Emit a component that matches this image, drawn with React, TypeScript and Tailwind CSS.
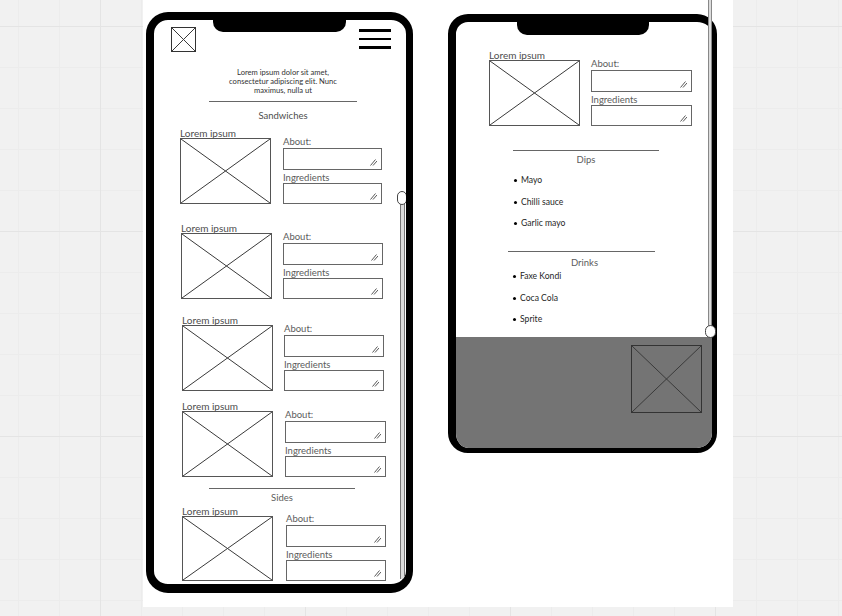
import React from 'react';

// wireframe cross box (image placeholder)
const XBox = ({ className }: { className: string }) => (
  <div className={`relative border ${className}`}>
    <svg className="absolute inset-0 h-full w-full" viewBox="0 0 100 100" preserveAspectRatio="none">
      <line x1="0" y1="0" x2="100" y2="100" stroke="#3a3a3a" strokeWidth="1" vectorEffect="non-scaling-stroke" />
      <line x1="100" y1="0" x2="0" y2="100" stroke="#3a3a3a" strokeWidth="1" vectorEffect="non-scaling-stroke" />
    </svg>
  </div>
);

const Field = ({ h }: { h: string }) => (
  <div className={`relative w-full border border-[#666] bg-white ${h}`}>
    <svg className="absolute bottom-[3px] right-[4px]" width="7" height="7" viewBox="0 0 7 7">
      <path d="M0.5 6.5 L5.5 0.5 M3 6.5 L7 2" stroke="#444" strokeWidth="0.9" fill="none" />
    </svg>
  </div>
);

type ItemProps = { wrap: string; gap: string; fieldW: string; boxH?: string };

const MenuItem = ({ wrap, gap, fieldW, boxH = 'h-[66px]' }: ItemProps) => (
  <div className={`flex items-end ${wrap} ${gap}`}>
    <div className="flex flex-col">
      <span className="h-[10px] whitespace-nowrap text-[10px] leading-[10px] text-[#4d4d4d]">Lorem ipsum</span>
      <XBox className={`w-[91px] border-[#555] ${boxH}`} />
    </div>
    <div className={`flex flex-col ${fieldW}`}>
      <span className="h-[12px] text-[9.5px] leading-[12px] text-[#5c5c5c]">About:</span>
      <Field h="h-[22px]" />
      <span className="mt-[2px] h-[11px] text-[9.5px] leading-[11px] text-[#5c5c5c]">Ingredients</span>
      <Field h="h-[21px]" />
    </div>
  </div>
);

const Bullet = ({ label }: { label: string }) => (
  <li className="flex h-[21.5px] items-center gap-[4px] text-[8.6px] text-[#262626]">
    <span className="h-[3px] w-[3px] rounded-full bg-black" />
    {label}
  </li>
);

export default function App() {
  return (
    <div className="h-[616px] w-[842px] overflow-hidden bg-[#f1f1f1] bg-[linear-gradient(to_right,#e4e4e4_1px,transparent_1px),linear-gradient(to_bottom,#e4e4e4_1px,transparent_1px),linear-gradient(to_right,#ececec_1px,transparent_1px),linear-gradient(to_bottom,#ececec_1px,transparent_1px)] bg-size-[205px_205px,205px_205px,41px_41px,41px_41px] bg-position-[100px_26px] font-[family-name:Lato,sans-serif]">
      {/* Canvas */}
      <div className="relative ml-[143px] flex h-[607px] w-[590px] items-start bg-white">
        {/* Left phone */}
        <div className="relative ml-[3px] mt-[12px] h-[581px] w-[267px] overflow-hidden rounded-[22px] border-b-[9px] border-l-[8px] border-r-[7px] border-t-[8px] border-black bg-white">
          <div className="absolute left-[59px] top-0 h-[12px] w-[133px] rounded-b-[10px] bg-black" />

          <div className="flex items-start justify-between pl-[17px] pr-[15px] pt-[7px]">
            <XBox className="h-[25px] w-[25px] border-[#333]" />
            <div className="mt-[2px] flex w-[32px] flex-col gap-[6px]">
              <div className="h-[2.5px] bg-black" />
              <div className="h-[2.5px] bg-black" />
              <div className="h-[2.5px] bg-black" />
            </div>
          </div>

          <div className="ml-[55px] w-[148px] text-center">
            <p className="mt-[15.5px] whitespace-nowrap text-[7.6px] leading-[9px] text-[#333]">
              Lorem ipsum dolor sit amet,
              <br />
              consectetur adipiscing elit. Nunc
              <br />
              maximus, nulla ut
            </p>
            <div className="mt-[6.5px] h-px bg-[#666]" />
            <p className="mt-[8px] text-[9.5px] leading-[12px] text-[#4d4d4d]">Sandwiches</p>
          </div>

          <MenuItem wrap="mt-[6px] pl-[26px]" gap="gap-[12px]" fieldW="w-[99px]" />
          <MenuItem wrap="mt-[19px] pl-[27px]" gap="gap-[11px]" fieldW="w-[100px]" />
          <MenuItem wrap="mt-[16px] pl-[28px]" gap="gap-[11px]" fieldW="w-[100px]" />
          <MenuItem wrap="mt-[10px] pl-[28px]" gap="gap-[12px]" fieldW="w-[101px]" />

          <div className="ml-[55px] w-[146px] text-center">
            <div className="mt-[11px] h-px bg-[#666]" />
            <p className="mt-[3px] text-[9.5px] leading-[12px] text-[#5c5c5c]">Sides</p>
          </div>

          <MenuItem wrap="mt-[2px] pl-[28px]" gap="gap-[13px]" fieldW="w-[100px]" boxH="h-[65px]" />

          {/* scroll track */}
          <div className="absolute bottom-[5px] left-[246px] top-[180px] w-[5px] border-x border-[#777] bg-[#dcdcdc]" />
          <div className="absolute left-[243px] top-[171px] h-[14px] w-[10px] rounded-full border border-[#444] bg-white" />
        </div>

        {/* Right phone */}
        <div className="relative ml-[35px] mt-[14px] flex h-[439px] w-[269px] flex-col overflow-hidden rounded-[20px] border-b-[5px] border-l-[8px] border-r-[5px] border-t-[8px] border-black bg-white">
          <div className="absolute left-[61px] top-0 h-[13px] w-[132px] rounded-b-[10px] bg-black" />

          <div className="h-[315px] shrink-0 pt-[28px]">
            <MenuItem wrap="pl-[33px]" gap="gap-[11px]" fieldW="w-[101px]" />

            <div className="ml-[57px] mt-[24px] h-px w-[146px] bg-[#666]" />
            <p className="ml-[57px] mt-[3px] w-[146px] text-center text-[9.5px] leading-[12px] text-[#5c5c5c]">Dips</p>
            <ul className="mt-[4px] pl-[58px]">
              <Bullet label="Mayo" />
              <Bullet label="Chilli sauce" />
              <Bullet label="Garlic mayo" />
            </ul>

            <div className="ml-[52px] mt-[16.5px] h-px w-[147px] bg-[#666]" />
            <p className="ml-[55px] mt-[6px] h-[10px] w-[147px] text-center text-[9.5px] leading-[10px] text-[#5c5c5c]">Drinks</p>
            <ul className="mt-[-2px] pl-[57px]">
              <Bullet label="Faxe Kondi" />
              <Bullet label="Coca Cola" />
              <Bullet label="Sprite" />
            </ul>
          </div>

          <div className="flex flex-1 items-start justify-end bg-[#747474] pr-[10px] pt-[8px]">
            <XBox className="h-[68px] w-[71px] border-[#333]" />
          </div>
        </div>

        {/* right scroll line */}
        <div className="absolute left-[565px] top-0 h-[326px] w-[4px] border-x border-[#888] bg-[#dcdcdc]" />
        <div className="absolute left-[562px] top-[325px] h-[13px] w-[11px] rounded-full border border-[#444] bg-white" />
      </div>
    </div>
  );
}
